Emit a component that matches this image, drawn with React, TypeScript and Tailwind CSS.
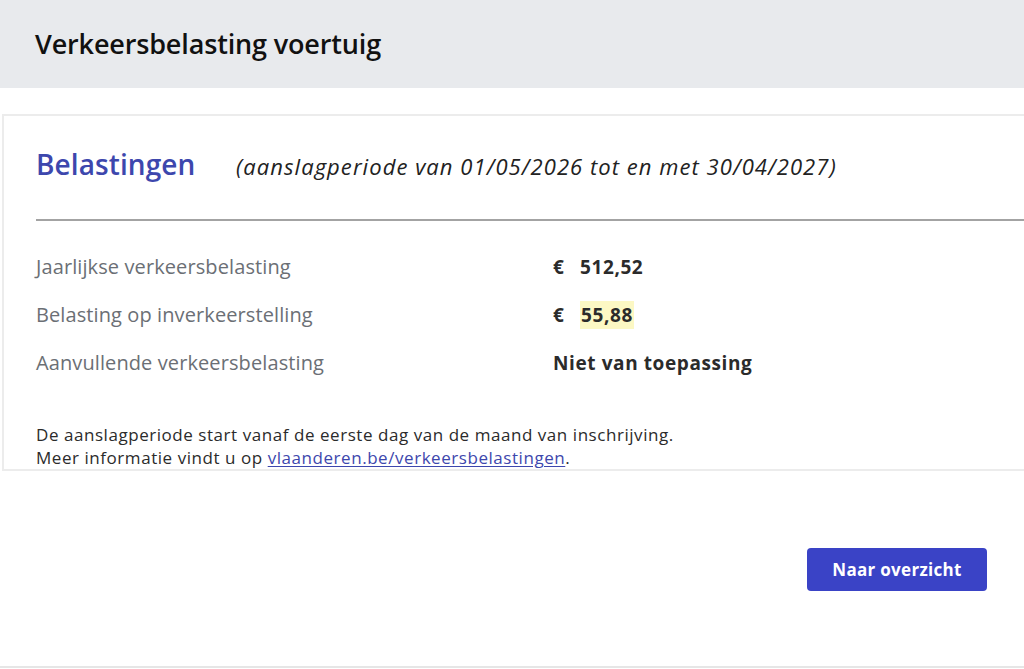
import React from 'react';

const FONT = { fontFamily: '"Open Sans", "Noto Sans", sans-serif' };

// Tax rows shown in the card
const ROWS = [
  { label: 'Jaarlijkse verkeersbelasting', amount: '512,52', highlight: false },
  { label: 'Belasting op inverkeerstelling', amount: '55,88', highlight: true },
  { label: 'Aanvullende verkeersbelasting', amount: null, highlight: false },
];

export default function App() {
  return (
    <div className="h-[669px] overflow-hidden bg-white text-[#1f1f1f]" style={FONT}>
      {/* Page title bar */}
      <header className="h-[88px] bg-[#e8eaed] flex items-center px-[35px]">
        <h1 className="text-[27px] leading-[32px] font-semibold tracking-[-0.15px] text-[#111]">Verkeersbelasting voertuig</h1>
      </header>

      {/* Taxes card */}
      <section className="mt-[26px] ml-[2px] border-t-2 border-l-2 border-b-2 border-[#ececec] pl-[32px] pt-[26px]">
        <div className="flex items-baseline h-[44px]">
          <h2 className="w-[200px] text-[28px] leading-[44px] font-semibold text-[#3d47ad] tracking-[0.1px]">Belastingen</h2>
          <span className="text-[22px] leading-[44px] italic text-[#222] tracking-[1.05px]">
            (aanslagperiode van 01/05/2026 tot en met 30/04/2027)
          </span>
        </div>

        <div className="mt-[33px] border-t-2 border-[#a3a3a3]" />

        <dl className="mt-[22px] flex flex-col">
          {ROWS.map((row) => (
            <div key={row.label} className="flex items-center h-[48px]">
              <dt className="w-[517px] text-[20px] text-[#6b6f75] tracking-[0.1px]">{row.label}</dt>
              <dd className="text-[19px] font-bold text-[#2b2b2b] tracking-[0.6px]">
                {row.amount ? (
                  <span className="flex items-center">
                    <span className="w-[27px]">€</span>
                    <span className={row.highlight ? 'bg-[#fcf8c4] px-[1px]' : ''}>{row.amount}</span>
                  </span>
                ) : (
                  'Niet van toepassing'
                )}
              </dd>
            </div>
          ))}
        </dl>

        <p className="mt-[36px] text-[17px] leading-[23px] text-[#2b2b2b] tracking-[0.55px]">
          De aanslagperiode start vanaf de eerste dag van de maand van inschrijving.
          <br />
          Meer informatie vindt u op{' '}
          <a href="#" className="text-[#3d47ad] underline underline-offset-2">
            vlaanderen.be/verkeersbelastingen
          </a>
          .
        </p>
      </section>

      {/* Actions */}
      <div className="flex justify-end pr-[37px] pt-[77px] pb-[75px] border-b-2 border-[#e6e6e6]">
        <button className="h-[43px] w-[180px] rounded-[4px] bg-[#3a43c6] text-white text-[17px] font-bold tracking-[0.3px]">
          Naar overzicht
        </button>
      </div>
    </div>
  );
}
